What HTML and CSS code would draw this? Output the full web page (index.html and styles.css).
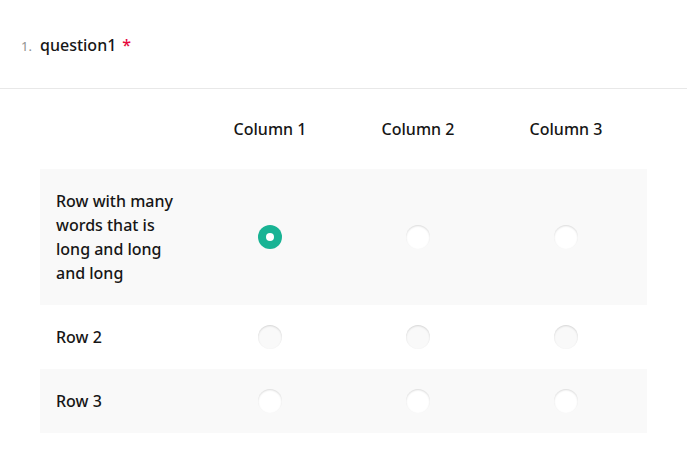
FILE: index.html
```html
<!DOCTYPE html>
<html>
<head>
<meta charset="utf-8">
<link rel="stylesheet" href="styles.css">
</head>
<body>
<div class="question">
  <div class="q-header">
    <h5 class="q-title"><span class="q-num">1.</span><span class="q-text">question1</span><span class="q-req">*</span></h5>
  </div>
  <div class="q-content">
    <div class="matrix">
      <div class="m-row m-head">
        <div class="m-cell m-label"></div>
        <div class="m-cell m-col">Column 1</div>
        <div class="m-cell m-col">Column 2</div>
        <div class="m-cell m-col">Column 3</div>
      </div>
      <div class="m-row m-alt">
        <div class="m-cell m-label">Row with many words that is long and long and long</div>
        <div class="m-cell m-choice"><span class="radio checked"></span></div>
        <div class="m-cell m-choice"><span class="radio"></span></div>
        <div class="m-cell m-choice"><span class="radio"></span></div>
      </div>
      <div class="m-row">
        <div class="m-cell m-label">Row 2</div>
        <div class="m-cell m-choice"><span class="radio"></span></div>
        <div class="m-cell m-choice"><span class="radio"></span></div>
        <div class="m-cell m-choice"><span class="radio"></span></div>
      </div>
      <div class="m-row m-alt">
        <div class="m-cell m-label">Row 3</div>
        <div class="m-cell m-choice"><span class="radio"></span></div>
        <div class="m-cell m-choice"><span class="radio"></span></div>
        <div class="m-cell m-choice"><span class="radio"></span></div>
      </div>
    </div>
  </div>
</div>
</body>
</html>
```
FILE: styles.css
```css
html, body {
  margin: 0;
  padding: 0;
  background: #fff;
}
body {
  font-family: "Noto Sans", "Open Sans", sans-serif;
  color: #161616;
}
.q-header {
  height: 89px;
  padding: 0 20px;
  display: flex;
  align-items: center;
  border-bottom: 1px solid #e8e8e8;
  box-sizing: border-box;
  padding-top: 2px;
}
.q-title {
  margin: 0;
  font-size: 16px;
  line-height: 24px;
  font-weight: 500;
  display: flex;
  align-items: baseline;
}
.q-num {
  font-size: 13px;
  font-weight: 400;
  color: #909090;
  width: 20px;
  padding-left: 1px;
  box-sizing: border-box;
}
.q-req {
  color: #e60a3e;
  margin-left: 6px;
}
.q-content {
  padding: 0 40px 40px;
}
.m-row {
  display: grid;
  grid-template-columns: 156px repeat(3, 148px);
  align-items: center;
}
.m-head {
  height: 80px;
}
.m-alt {
  background: #f9f9f9;
}
.m-cell {
  box-sizing: border-box;
  font-size: 16px;
  line-height: 24px;
  font-weight: 500;
}
.m-col {
  text-align: center;
  font-weight: 500;
}
.m-label {
  padding: 20px 16px;
}
.m-choice {
  display: flex;
  justify-content: center;
}
.radio {
  width: 24px;
  height: 24px;
  border-radius: 50%;
  background: #f9f9f9;
  box-shadow: inset 0 1px 2px rgba(0, 0, 0, 0.15);
  display: flex;
  align-items: center;
  justify-content: center;
}
.m-alt .radio {
  background: #fff;
}
.m-row .radio.checked {
  background: #19b394;
  box-shadow: none;
}
.radio.checked::after {
  content: "";
  width: 8px;
  height: 8px;
  border-radius: 50%;
  background: #fff;
}
```
